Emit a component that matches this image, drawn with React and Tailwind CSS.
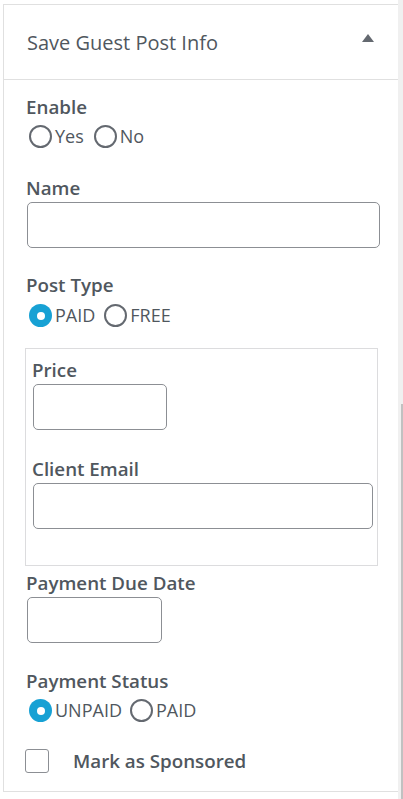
import React from 'react';

function Radio({ checked, label }) {
  return (
    <label className="flex items-center">
      {checked ? (
        <span className="w-[23px] h-[23px] rounded-full bg-[#17a1d4] flex items-center justify-center">
          <span className="w-[8px] h-[8px] rounded-full bg-white" />
        </span>
      ) : (
        <span className="w-[23px] h-[23px] rounded-full border-[2.5px] border-[#646970] bg-white" />
      )}
      <span className="ml-[3px] text-[18px] leading-[23px] text-[#50575e]">{label}</span>
    </label>
  );
}

function Label({ children, className = '' }) {
  return (
    <div className={`text-[18.75px] leading-[22px] font-semibold text-[#50575e] ${className}`}>{children}</div>
  );
}

function Field({ label, className }) {
  return (
    <div>
      <Label>{label}</Label>
      <div className={`mt-[3px] h-[46px] rounded-[5px] border border-[#8c8f94] bg-white ${className}`} />
    </div>
  );
}

export default function App() {
  return (
    <div className="w-[403px] h-[799px] flex bg-white overflow-hidden" style={{ fontFamily: '"Open Sans", "Liberation Sans", sans-serif' }}>
      <div className="flex-1 pt-[4px] pl-[3px]">
        <div className="border-l border-t border-b border-[#e0e0e0] h-[788px] flex flex-col">
          {/* Header */}
          <div className="h-[75px] shrink-0 border-b border-[#e0e0e0] flex items-center justify-between pl-[23px] pr-[24px]">
            <h2 className="mt-[2px] text-[20px] leading-[26px] text-[#50575e]">Save Guest Post Info</h2>
            <svg width="12" height="8" viewBox="0 0 12 8" className="mb-[8px]">
              <polygon points="6,0 12,8 0,8" fill="#646970" />
            </svg>
          </div>

          <div className="pl-[22px] pr-[18px] pt-[16px]">
            <Label>Enable</Label>
            <div className="mt-[7px] ml-[3px] flex gap-[10px]">
              <Radio label="Yes" />
              <Radio label="No" />
            </div>

            <div className="mt-[29px]">
              <Field label="Name" className="w-[353px] ml-px" />
            </div>

            <Label className="mt-[26px]">Post Type</Label>
            <div className="mt-[8px] ml-[3px] flex gap-[9px]">
              <Radio checked label="PAID" />
              <Radio label="FREE" />
            </div>

            <div className="mt-[21px] w-[353px] -ml-px border border-[#dcdcde] pl-[6px] pr-[3px] pt-[10px] h-[218px]">
              <Field label="Price" className="w-[134px] ml-px" />
              <div className="mt-[28px]">
                <Field label="Client Email" className="w-[340px] ml-px" />
              </div>
            </div>

            <div className="mt-[6px]">
              <Field label="Payment Due Date" className="w-[135px] ml-px" />
            </div>

            <Label className="mt-[27px]">Payment Status</Label>
            <div className="mt-[7px] ml-[3px] flex gap-[8px]">
              <Radio checked label="UNPAID" />
              <Radio label="PAID" />
            </div>

            <div className="mt-[27px] flex items-center">
              <span className="w-[24px] h-[24px] -ml-px rounded-[3px] border border-[#8c8f94] bg-white" />
              <span className="ml-[24px] text-[18.75px] leading-[24px] font-semibold text-[#50575e]">Mark as Sponsored</span>
            </div>
          </div>
        </div>
      </div>
      <div className="w-[5px] bg-[#f0f0f0] flex flex-col">
        <div className="h-[404px]" />
        <div className="flex-1 ml-[3px] bg-[#c1c1c1]" />
      </div>
    </div>
  );
}
